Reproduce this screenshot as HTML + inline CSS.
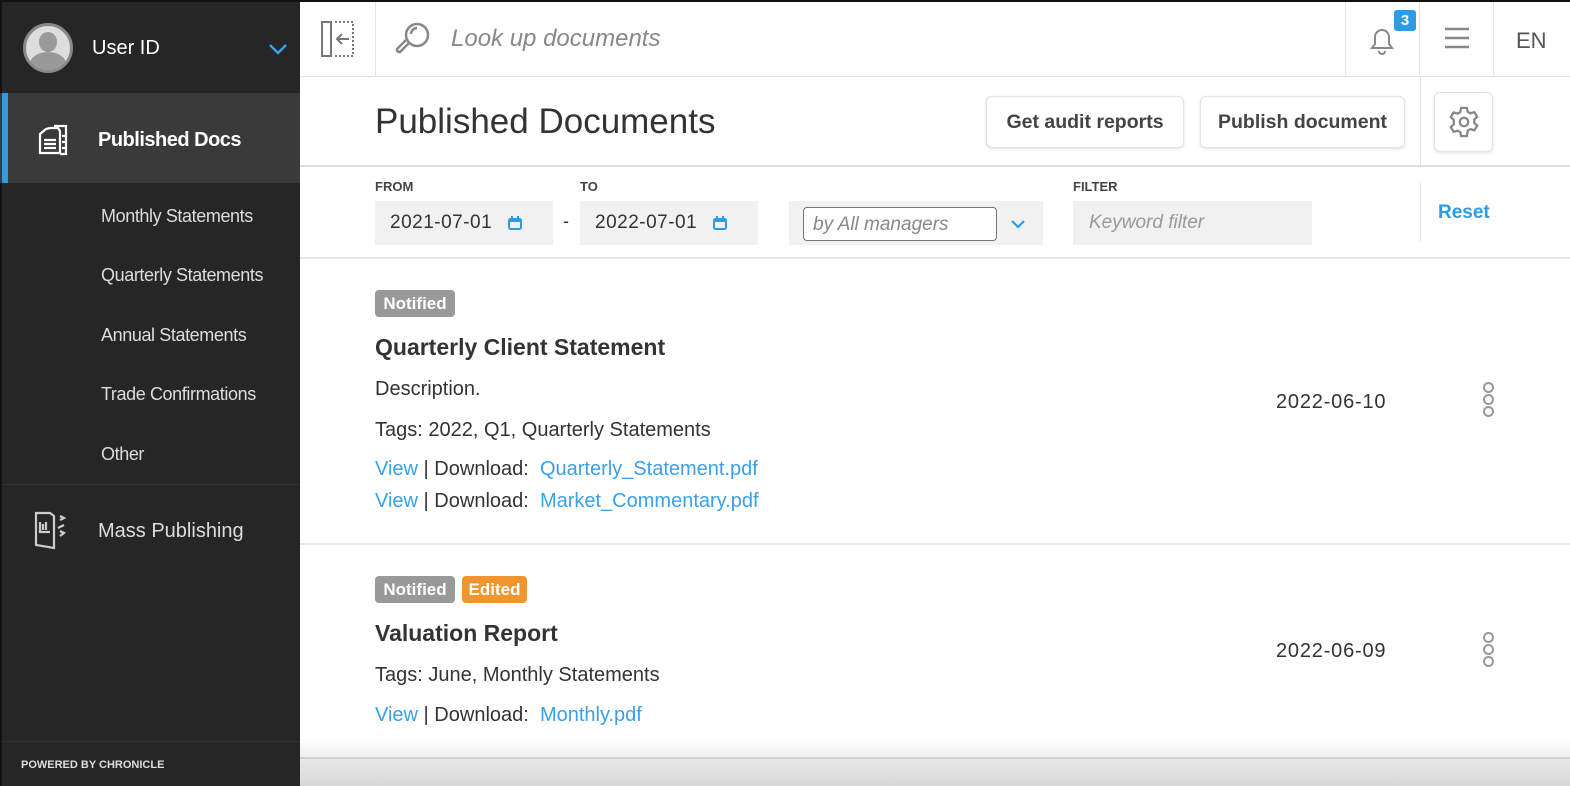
<!DOCTYPE html>
<html><head><meta charset="utf-8"><style>
*{box-sizing:border-box;margin:0;padding:0}
body{width:1570px;height:786px;overflow:hidden;font-family:"Liberation Sans",sans-serif;background:#fff;position:relative;color:#333}
.a{position:absolute}
.sb{left:0;top:0;width:300px;height:786px;background:#262626;border-top:2px solid #111;border-left:2px solid #111}
.sub{position:absolute;left:99px;color:#ddd;font-size:18px;letter-spacing:-0.4px}
.lnk{color:#3aa0e8}
.btn{border:1px solid #e2e2e2;border-radius:6px;box-shadow:0 1px 3px rgba(0,0,0,.12);background:#fff;font-weight:bold;font-size:19.5px;color:#444;display:flex;align-items:center;justify-content:center}
.lbl{font-size:13px;font-weight:bold;color:#444}
.inp{background:#f1f1f1;height:44px;font-size:19px;letter-spacing:.5px;color:#333;display:flex;align-items:center}
.bdg{height:27px;border-radius:4px;color:#fff;font-weight:bold;font-size:17px;display:flex;align-items:center;justify-content:center}
.t{font-size:20px;color:#333}
.dots span{display:block;width:11px;height:11px;border:2px solid #999;border-radius:50%;margin-bottom:1px}
</style></head><body>
<div class="a" style="left:0;top:0;width:1570px;height:2px;background:#111"></div>
<div class="a sb">
 <div class="a" style="left:21px;top:21px;width:50px;height:50px;border-radius:50%;background:#ddd;border:3px solid #888;overflow:hidden">
  <div class="a" style="left:13px;top:6px;width:18px;height:20px;border-radius:50%;background:#999"></div>
  <div class="a" style="left:4px;top:26px;width:36px;height:24px;border-radius:50% 50% 0 0;background:#999"></div>
 </div>
 <div class="a" style="left:90px;top:35px;color:#fff;font-size:20px">User ID</div>
 <svg class="a" style="left:266px;top:40px" width="20" height="14"><path d="M2 3l8 8 8-8" stroke="#3aa0e8" stroke-width="2.5" fill="none"/></svg>
 <div class="a" style="left:-2px;top:91px;width:300px;height:90px;background:#3a3a3a"></div>
 <div class="a" style="left:0;top:91px;width:6px;height:90px;background:#2d9be6"></div>
 <svg class="a" style="left:34px;top:120px" width="36" height="36" viewBox="0 0 36 36" fill="none" stroke="#fff" stroke-width="2.2"><path d="M14 6h8l2 3v22H4V12l6-5z"/><path d="M18 4h12v28H24"/><path d="M8 18h12M8 22h12M8 26h12M26 14h3M26 20h3M26 26h3"/></svg>
 <div class="a" style="left:96px;top:127px;color:#fff;font-size:20px;font-weight:bold;letter-spacing:-0.5px">Published Docs</div>
 <div class="sub" style="top:204px">Monthly Statements</div>
 <div class="sub" style="top:263px">Quarterly Statements</div>
 <div class="sub" style="top:323px">Annual Statements</div>
 <div class="sub" style="top:382px">Trade Confirmations</div>
 <div class="sub" style="top:442px">Other</div>
 <div class="a" style="left:0;top:482px;width:298px;height:1px;background:#333"></div>
 <svg class="a" style="left:30px;top:508px" width="44" height="42" viewBox="0 0 44 42" fill="none" stroke="#ccc" stroke-width="2.2"><path d="M4 3h14l4 3v32l-18-3z"/><path d="M8 12v10h10M11 14v6M14 12v8"/><path d="M28 10l4-2-4-2M26 18l6-3M28 26l4-3-4-2"/></svg>
 <div class="a" style="left:96px;top:518px;color:#ddd;font-size:20px">Mass Publishing</div>
 <div class="a" style="left:0;top:739px;width:298px;height:1px;background:#333"></div>
 <div class="a" style="left:19px;top:757px;color:#ddd;font-size:11px;font-weight:bold">POWERED BY CHRONICLE</div>
</div>
<!-- top bar -->
<div class="a" style="left:300px;top:76px;width:1270px;height:1px;background:#e4e4e4"></div>
<div class="a" style="left:375px;top:2px;width:1px;height:74px;background:#e4e4e4"></div>
<div class="a" style="left:1345px;top:2px;width:1px;height:74px;background:#e4e4e4"></div>
<div class="a" style="left:1419px;top:2px;width:1px;height:74px;background:#e4e4e4"></div>
<div class="a" style="left:1493px;top:2px;width:1px;height:74px;background:#e4e4e4"></div>
<svg class="a" style="left:319px;top:20px" width="38" height="38" viewBox="0 0 38 38" fill="none" stroke="#777" stroke-width="2"><rect x="3" y="2" width="9" height="34"/><path d="M16 2h18v34H16" stroke-dasharray="2 2"/><path d="M30 19H18M23 14l-5 5 5 5"/></svg>
<svg class="a" style="left:394px;top:20px" width="40" height="38" viewBox="0 0 40 38" fill="none" stroke="#888" stroke-width="2.5"><circle cx="23" cy="15" r="11"/><path d="M17 14a6 6 0 0 1 6-6"/><path d="M15 23l-9 9a2.5 2.5 0 0 1-3-3l9-9"/></svg>
<div class="a" style="left:451px;top:25px;font-size:24px;font-style:italic;color:#888">Look up documents</div>
<svg class="a" style="left:1367px;top:24px" width="30" height="32" viewBox="0 0 30 32" fill="none" stroke="#888" stroke-width="2"><path d="M5 24h20l-3-4V13a7 7 0 0 0-14 0v7z"/><path d="M12 27a3 3 0 0 0 6 0"/></svg>
<div class="a" style="left:1394px;top:10px;width:22px;height:21px;background:#2d9be6;border-radius:3px;color:#fff;font-weight:bold;font-size:15px;text-align:center;line-height:21px">3</div>
<svg class="a" style="left:1445px;top:27px" width="24" height="22"><path d="M0 2h24M0 11h24M0 20h24" stroke="#888" stroke-width="2.5"/></svg>
<div class="a" style="left:1516px;top:28px;font-size:22px;color:#555">EN</div>
<!-- title row -->
<div class="a" style="left:375px;top:102px;font-size:35px;color:#333">Published Documents</div>
<div class="a btn" style="left:986px;top:96px;width:198px;height:52px">Get audit reports</div>
<div class="a btn" style="left:1200px;top:96px;width:205px;height:52px">Publish document</div>
<div class="a" style="left:1420px;top:77px;width:1px;height:89px;background:#e4e4e4"></div>
<div class="a btn" style="left:1434px;top:92px;width:59px;height:60px"><svg width="34" height="34" viewBox="0 0 24 24" fill="none" stroke="#888" stroke-width="1.6"><circle cx="12" cy="12" r="3"/><path d="M10 2h4l.6 2.8 2 1.1 2.7-.9 2 3.4-2.1 1.9v2.3l2.1 1.9-2 3.4-2.7-.9-2 1.1L14 22h-4l-.6-2.8-2-1.1-2.7.9-2-3.4 2.1-1.9V10.5L2.7 8.6l2-3.4 2.7.9 2-1.1z"/></svg></div>
<div class="a" style="left:300px;top:165px;width:1270px;height:2px;background:#ddd"></div>
<!-- filters -->
<div class="a lbl" style="left:375px;top:179px">FROM</div>
<div class="a lbl" style="left:580px;top:179px">TO</div>
<div class="a lbl" style="left:1073px;top:179px">FILTER</div>
<div class="a inp" style="left:375px;top:201px;width:178px;padding-left:15px">2021-07-01<svg style="margin-left:16px" width="14" height="14"><rect x="1" y="3" width="12" height="10" rx="1.5" fill="none" stroke="#2d9be6" stroke-width="2"/><path d="M1 5h12M4 0v3M10 0v3" stroke="#2d9be6" stroke-width="2"/></svg></div>
<div class="a" style="left:563px;top:211px;font-size:18px">-</div>
<div class="a inp" style="left:580px;top:201px;width:178px;padding-left:15px">2022-07-01<svg style="margin-left:16px" width="14" height="14"><rect x="1" y="3" width="12" height="10" rx="1.5" fill="none" stroke="#2d9be6" stroke-width="2"/><path d="M1 5h12M4 0v3M10 0v3" stroke="#2d9be6" stroke-width="2"/></svg></div>
<div class="a inp" style="left:789px;top:201px;width:254px"></div>
<div class="a" style="left:803px;top:207px;width:194px;height:34px;background:#fff;border:1px solid #777;border-radius:4px;padding:6px 9px;font-size:19px;font-style:italic;color:#888">by All managers</div>
<svg class="a" style="left:1010px;top:218px" width="16" height="12"><path d="M2 3l6 6 6-6" stroke="#2d9be6" stroke-width="2.2" fill="none"/></svg>
<div class="a inp" style="left:1073px;top:201px;width:239px;padding-left:16px;font-style:italic;color:#999;letter-spacing:0">Keyword filter</div>
<div class="a" style="left:1420px;top:183px;width:1px;height:59px;background:#e4e4e4"></div>
<div class="a" style="left:1438px;top:202px;font-size:19px;font-weight:bold;color:#2d9be6">Reset</div>
<div class="a" style="left:300px;top:257px;width:1270px;height:2px;background:#e8e8e8"></div>
<!-- doc 1 -->
<div class="a bdg" style="left:375px;top:290px;width:80px;background:#999">Notified</div>
<div class="a" style="left:375px;top:334px;font-size:23px;font-weight:bold;color:#333">Quarterly Client Statement</div>
<div class="a t" style="left:375px;top:378px">Description.</div>
<div class="a t" style="left:375px;top:419px">Tags: 2022, Q1, Quarterly Statements</div>
<div class="a t" style="left:375px;top:458px"><span class="lnk">View</span> | Download:&nbsp; <span class="lnk">Quarterly_Statement.pdf</span></div>
<div class="a t" style="left:375px;top:490px"><span class="lnk">View</span> | Download:&nbsp; <span class="lnk">Market_Commentary.pdf</span></div>
<div class="a t" style="left:1276px;top:391px;letter-spacing:.8px">2022-06-10</div>
<div class="a dots" style="left:1483px;top:382px"><span></span><span></span><span></span></div>
<div class="a" style="left:300px;top:543px;width:1270px;height:2px;background:#e8e8e8"></div>
<!-- doc 2 -->
<div class="a bdg" style="left:375px;top:576px;width:80px;background:#999">Notified</div>
<div class="a bdg" style="left:462px;top:576px;width:65px;background:#f0952f">Edited</div>
<div class="a" style="left:375px;top:620px;font-size:23px;font-weight:bold;color:#333">Valuation Report</div>
<div class="a t" style="left:375px;top:664px">Tags: June, Monthly Statements</div>
<div class="a t" style="left:375px;top:704px"><span class="lnk">View</span> | Download:&nbsp; <span class="lnk">Monthly.pdf</span></div>
<div class="a t" style="left:1276px;top:640px;letter-spacing:.8px">2022-06-09</div>
<div class="a dots" style="left:1483px;top:632px"><span></span><span></span><span></span></div>
<!-- bottom -->
<div class="a" style="left:300px;top:738px;width:1270px;height:20px;background:linear-gradient(#fff,#eee)"></div>
<div class="a" style="left:300px;top:757px;width:1270px;height:2px;background:#d0d0d0"></div>
<div class="a" style="left:300px;top:759px;width:1270px;height:27px;background:linear-gradient(#e8e8e8,#d8d8d8)"></div>
</body></html>
